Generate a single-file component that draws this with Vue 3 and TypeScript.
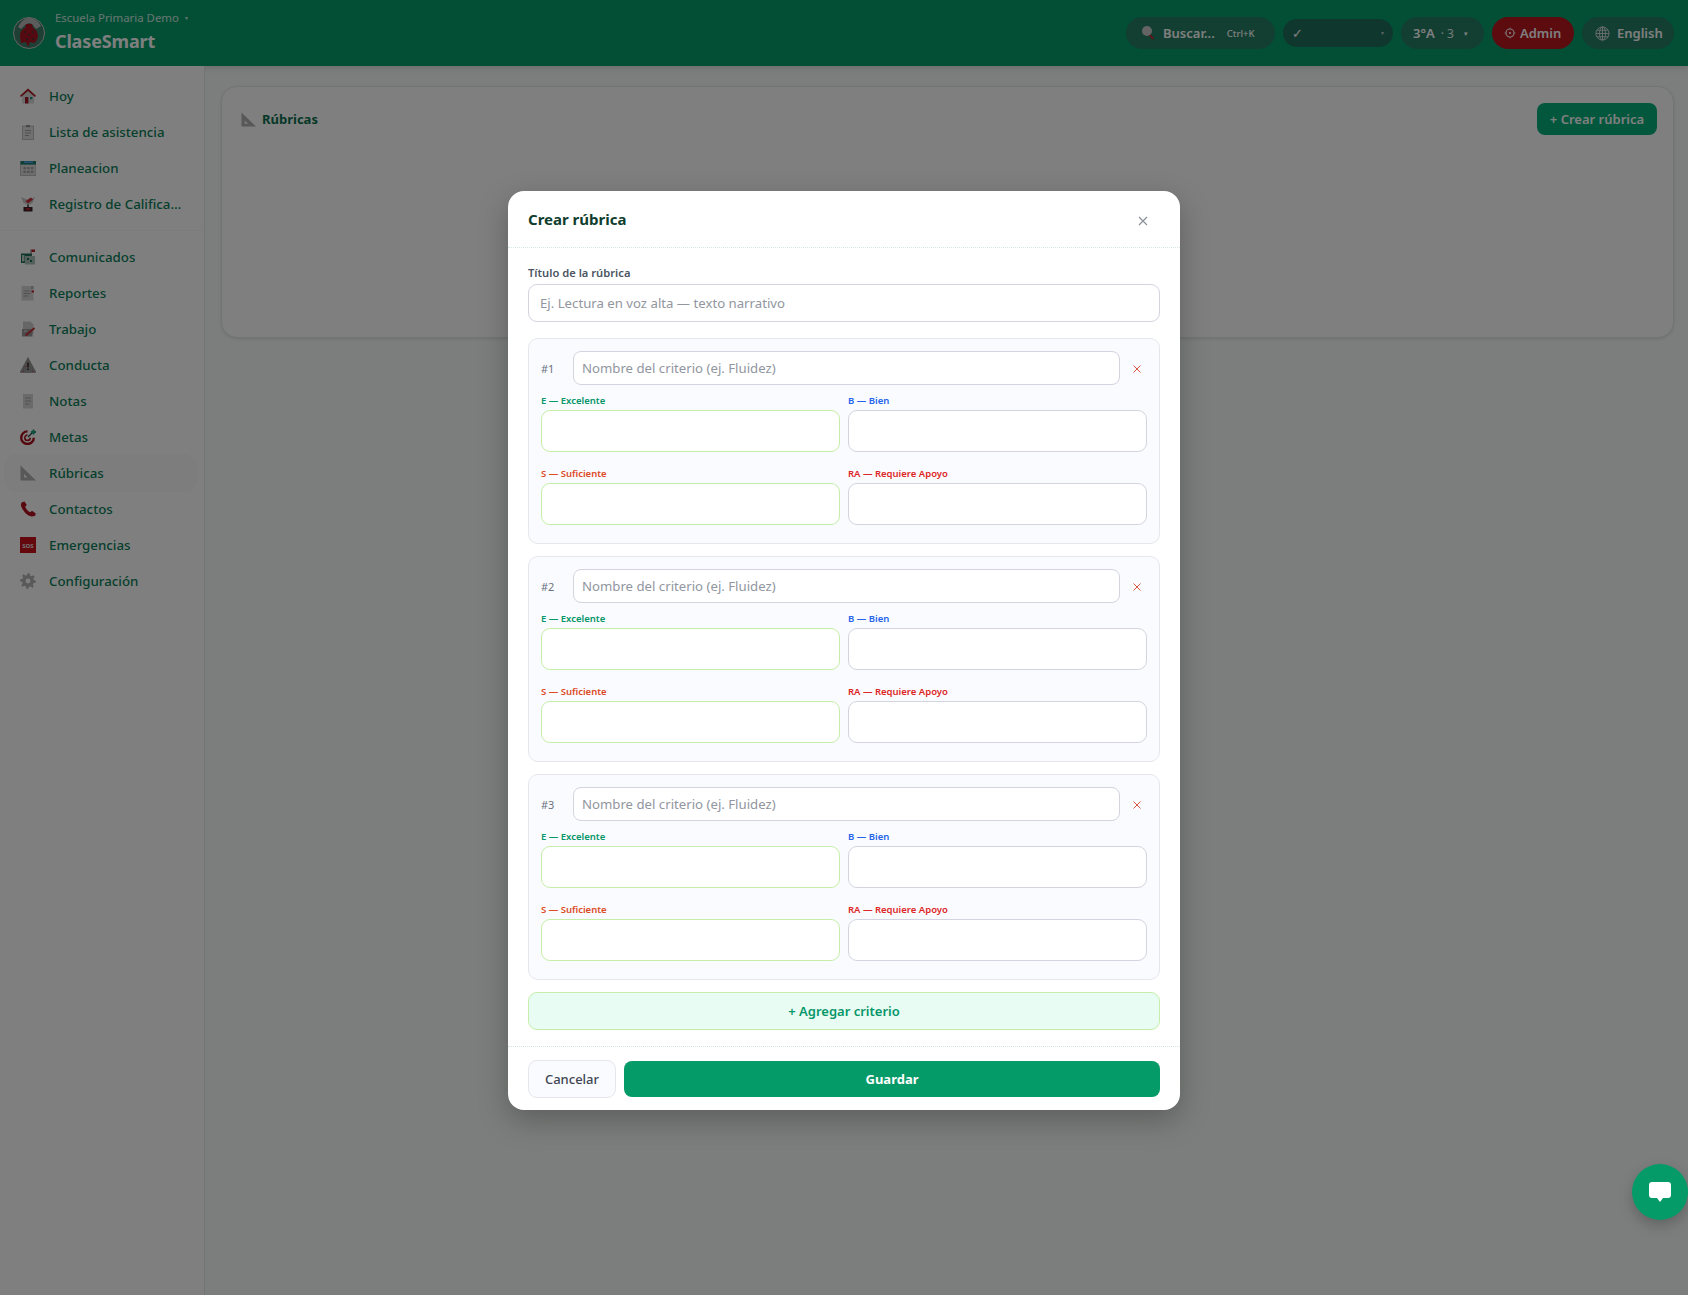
<script setup lang="ts">
interface Shape {
  d: string
  fill?: string
  stroke?: string
  sw?: number
}
interface NavItem {
  label: string
  active?: boolean
  sos?: boolean
  shapes: Shape[]
}

// gear outline, built once so the teeth stay even
function gearPath(cx: number, cy: number, outer: number, inner: number, teeth: number): string {
  const pts: string[] = []
  const step = (Math.PI * 2) / (teeth * 4)
  for (let i = 0; i < teeth * 4; i++) {
    const r = i % 4 < 2 ? outer : inner
    const a = i * step
    pts.push(`${(cx + Math.cos(a) * r).toFixed(2)} ${(cy + Math.sin(a) * r).toFixed(2)}`)
  }
  return `M${pts.join('L')}Z`
}

const rulerPath = 'M0.5 0.5L16 15.5H0.5Z M4 9V12.5H7.5Z'

const topNav: NavItem[] = [
  {
    label: 'Hoy',
    shapes: [
      { d: 'M2 7.5L8 2.5l6 5V15.5H2Z', fill: '#d8d8d8' },
      { d: 'M8 0.5L16 7.8 15 9 8 3 1 9 0 7.8Z', fill: '#a81822' },
      { d: 'M5 9h3.4v6.5H5Z', fill: '#a01b28' },
      { d: 'M10 9h2.4v2.2H10Z', fill: '#1f8a8a' }
    ]
  },
  {
    label: 'Lista de asistencia',
    shapes: [
      { d: 'M2.5 2h11v13.5h-11Z', fill: '#e0e0e0', stroke: '#a8a8a8', sw: 0.7 },
      { d: 'M6 1h4v2.2H6Z', fill: '#909090' },
      { d: 'M5 6.5h6M5 9h6M5 11.5h4', stroke: '#a0a0a0', sw: 1 }
    ]
  },
  {
    label: 'Planeacion',
    shapes: [
      { d: 'M0.5 2h15.5v13.5H0.5Z', fill: '#dcdcdc', stroke: '#9a9a9a', sw: 0.6 },
      { d: 'M0.5 1h15.5v3.6H0.5Z', fill: '#1f7f6f' },
      { d: 'M4 1.4h9v1.5H4Z', fill: '#4aa6ff' },
      { d: 'M3.5 7h2.4v2.2H3.5Zm3.7 0h2.4v2.2H7.2Zm3.7 0h2.4v2.2h-2.4ZM3.5 10.8h2.4V13H3.5Zm3.7 0h2.4V13H7.2Zm3.7 0h2.4V13h-2.4Z', fill: '#a2a2a2' }
    ]
  },
  {
    label: 'Registro de Calificaciones',
    shapes: [
      { d: 'M1 1l7 3 7-3-2.5 6L8 9 3.5 7Z', fill: '#c8c8c8' },
      { d: 'M5.5 5L11 1.5l2 2L8 7.5Z', fill: '#c8323c' },
      { d: 'M7 8.5h2V11H7Z', fill: '#666' },
      { d: 'M3.5 11h9v4.5h-9Z', fill: '#3f2326' },
      { d: 'M6 12.2h4v1.8H6Z', fill: '#b8202c' }
    ]
  }
]

const bottomNav: NavItem[] = [
  {
    label: 'Comunicados',
    shapes: [
      { d: 'M1 4.5h11V14H1Z', fill: '#1d6e58' },
      { d: 'M5 7h10v8.5H5Z', fill: '#a8c0b8' },
      { d: 'M10.5 0.5h1V7h-1Z', fill: '#666' },
      { d: 'M11.5 0.5h3.5v2.5h-3.5Z', fill: '#b8202c' },
      { d: 'M2 6h2.5v6.5H2Z', fill: '#c4d0cc' },
      { d: 'M7 9h2v2H7Zm3 2h2v2h-2Z', fill: '#1d6e58' }
    ]
  },
  {
    label: 'Reportes',
    shapes: [
      { d: 'M1.5 1h12v14.5h-12Z', fill: '#d6d6d6' },
      { d: 'M3.5 6h6M3.5 8.5h7M3.5 11h5', stroke: '#a0a0a0', sw: 1 },
      { d: 'M11.5 5.5h2.5v2h-2.5Z', fill: '#c8202c' },
      { d: 'M11 1h2.5v3H11Z', fill: '#b4b4b4' }
    ]
  },
  {
    label: 'Trabajo',
    shapes: [
      { d: 'M3 0.5h7.5l3 3V13H3Z', fill: '#cdcdcd' },
      { d: 'M2 8h10.5v7.5H2Z', fill: '#989898' },
      { d: 'M5.5 14.5l9-7.5', stroke: '#c8303a', sw: 2 },
      { d: 'M4 10h3', stroke: '#dadada', sw: 1 }
    ]
  },
  {
    label: 'Conducta',
    shapes: [
      { d: 'M8 0.5L16 15.5H0Z', fill: '#969696', stroke: '#787878', sw: 0.5 },
      { d: 'M7.3 5.5h1.4v5H7.3Zm0 6h1.4V13H7.3Z', fill: '#3a1a1c' },
      { d: 'M3 13.5h1v1H3Zm9 0h1v1h-1ZM5 9h1v1H5Z', fill: '#c8323c' }
    ]
  },
  {
    label: 'Notas',
    shapes: [
      { d: 'M3 1h10v14.5H3Z', fill: '#d4d4d4' },
      { d: 'M5 5h6M5 8h6M5 11h4', stroke: '#a4a4a4', sw: 1 }
    ]
  },
  {
    label: 'Metas',
    shapes: [
      { d: 'M7.5 2.4a6.3 6.3 0 1 0 6.3 6.3', stroke: '#a8121e', sw: 2.4 },
      { d: 'M7.5 6a2.7 2.7 0 1 0 2.7 2.7', stroke: '#a8121e', sw: 1.6 },
      { d: 'M8 8L13 3', stroke: '#2b3f3a', sw: 1.2 },
      { d: 'M12.5 0.5h2v1.5H16v2h-1.5v1.5h-2V4H11V2h1.5Z', fill: '#1f9a78' }
    ]
  },
  { label: 'Rúbricas', active: true, shapes: [{ d: rulerPath, fill: '#b0b0b0' }] },
  {
    label: 'Contactos',
    shapes: [
      {
        d: 'M1.5 1.5L4.5 0.5 6.8 4 5.2 5.8C6 8 8 10.2 10.2 11.3L12 9.8 15.8 12.6 15 15 11.5 15.5C6.5 14.5 1.8 8.5 0.8 4Z',
        fill: '#b0101c'
      }
    ]
  },
  { label: 'Emergencias', sos: true, shapes: [{ d: 'M0 0h16v16H0Z', fill: '#c8101c' }] },
  {
    label: 'Configuración',
    shapes: [
      { d: `${gearPath(8, 8, 8, 5.8, 8)} M8 5.6a2.4 2.4 0 1 0 0 4.8a2.4 2.4 0 1 0 0-4.8Z`, fill: '#b2b2b2' }
    ]
  }
]

const levels = [
  { label: 'E — Excelente', cls: 'lv-e', lime: true },
  { label: 'B — Bien', cls: 'lv-b', lime: false },
  { label: 'S — Suficiente', cls: 'lv-s', lime: true },
  { label: 'RA — Requiere Apoyo', cls: 'lv-ra', lime: false }
]

const criteria = [1, 2, 3]
</script>

<template>
  <div class="app">
    <header class="topbar">
      <div class="brand">
        <svg class="logo" viewBox="0 0 32 32" width="32" height="32">
          <circle cx="16" cy="16" r="15.5" fill="#3f7d68" />
          <path d="M5 10C8 4 12 1 16 1s9 2 12 8l-5 3-4-5-3-1-4 2-4 4Z" fill="#b8b8b8" />
          <path d="M7 20c0-5 2-8 5-9l1-4h6l1 4c3 1 5 4 5 9l-3 6-5-1-2 5-2-5-5 1Z" fill="#a81420" />
          <path d="M11 14h2v2h-2Zm4 3h2v2h-2Zm4-3h2v2h-2Zm-6 7h2v2h-2Zm6 0h2v2h-2Z" fill="#5c2a30" />
          <circle cx="16" cy="16" r="15.5" fill="none" stroke="#c8c8c8" />
        </svg>
        <div class="brand-text">
          <div class="school">Escuela Primaria Demo <span class="school-caret">▾</span></div>
          <div class="app-name">ClaseSmart</div>
        </div>
      </div>
      <div class="top-actions">
        <button class="pill search-pill">
          <svg width="14" height="16" viewBox="0 0 14 16">
            <circle cx="6" cy="6" r="5" fill="#c8c8c8" />
            <path d="M9 10l3 4" stroke="#c8202c" stroke-width="2" />
          </svg>
          <span class="pill-text">Buscar...</span>
          <span class="kbd">Ctrl+K</span>
        </button>
        <div class="pill check-pill">
          <span class="check">✓</span>
          <span class="check-caret">▾</span>
        </div>
        <button class="pill group-pill">
          <span class="pill-text">3°A</span>
          <span class="group-count">· 3</span>
          <span class="group-caret">▾</span>
        </button>
        <button class="pill admin-pill">
          <svg width="12" height="12" viewBox="0 0 12 12">
            <circle cx="6" cy="6" r="4" fill="none" stroke="#fff" stroke-width="1.1" />
            <circle cx="6" cy="6" r="1.1" fill="#fff" />
            <path d="M6 .6v1.2M6 10.2v1.2M.6 6h1.2M10.2 6h1.2" stroke="#fff" stroke-width="0.8" />
          </svg>
          <span class="pill-text">Admin</span>
        </button>
        <button class="pill lang-pill">
          <svg width="15" height="15" viewBox="0 0 16 16" fill="none" stroke="#e4e4e4" stroke-width="0.9">
            <circle cx="8" cy="8" r="7" />
            <ellipse cx="8" cy="8" rx="3.2" ry="7" />
            <path d="M1 8h14M2 4.5h12M2 11.5h12M8 1v14" />
          </svg>
          <span class="pill-text">English</span>
        </button>
      </div>
    </header>

    <div class="layout">
      <aside class="sidebar">
        <nav class="nav-group top-group">
          <a v-for="item in topNav" :key="item.label" class="nav-item">
            <svg class="nav-icon" viewBox="0 0 16 16" width="16" height="16">
              <path
                v-for="(s, i) in item.shapes"
                :key="i"
                :d="s.d"
                :fill="s.fill || 'none'"
                :stroke="s.stroke"
                :stroke-width="s.sw"
                fill-rule="evenodd"
              />
            </svg>
            <span class="nav-label">{{ item.label }}</span>
          </a>
        </nav>
        <nav class="nav-group">
          <a
            v-for="item in bottomNav"
            :key="item.label"
            class="nav-item"
            :class="{ active: item.active }"
          >
            <svg class="nav-icon" viewBox="0 0 16 16" width="16" height="16">
              <path
                v-for="(s, i) in item.shapes"
                :key="i"
                :d="s.d"
                :fill="s.fill || 'none'"
                :stroke="s.stroke"
                :stroke-width="s.sw"
                fill-rule="evenodd"
              />
              <text v-if="item.sos" x="8" y="10.5" text-anchor="middle" class="sos">SOS</text>
            </svg>
            <span class="nav-label">{{ item.label }}</span>
          </a>
        </nav>
      </aside>

      <main class="content">
        <section class="panel">
          <div class="panel-head">
            <h2 class="panel-title">
              <svg viewBox="0 0 16 16" width="15" height="15">
                <path :d="rulerPath" fill="#b0b0b0" fill-rule="evenodd" />
              </svg>
              Rúbricas
            </h2>
            <button class="create-btn">+ Crear rúbrica</button>
          </div>
        </section>
      </main>
    </div>

    <div class="overlay">
      <div class="modal">
        <div class="modal-head">
          <h3>Crear rúbrica</h3>
          <svg class="close" width="10" height="10" viewBox="0 0 10 10">
            <path d="M1 1l8 8M9 1l-8 8" stroke="#8b8f98" stroke-width="1.2" />
          </svg>
        </div>
        <div class="modal-body">
          <label class="title-label">Título de la rúbrica</label>
          <input class="title-input" placeholder="Ej. Lectura en voz alta — texto narrativo" />

          <div v-for="n in criteria" :key="n" class="criterion">
            <div class="crit-row">
              <span class="crit-num">#{{ n }}</span>
              <input class="crit-input" placeholder="Nombre del criterio (ej. Fluidez)" />
              <svg class="crit-remove" width="8" height="8" viewBox="0 0 8 8">
                <path d="M.5.5l7 7M7.5.5l-7 7" stroke="#d9553f" stroke-width="1" />
              </svg>
            </div>
            <div class="levels">
              <div v-for="lv in levels" :key="lv.label" class="level">
                <label :class="lv.cls">{{ lv.label }}</label>
                <textarea :class="{ lime: lv.lime }"></textarea>
              </div>
            </div>
          </div>

          <button class="add-btn">+ Agregar criterio</button>
        </div>
        <div class="modal-foot">
          <button class="cancel-btn">Cancelar</button>
          <button class="save-btn">Guardar</button>
        </div>
      </div>
    </div>

    <button class="fab">
      <svg width="22" height="20" viewBox="0 0 22 20">
        <path d="M3 0h16a3 3 0 0 1 3 3v10a3 3 0 0 1-3 3h-5l-3 4-3-4H3a3 3 0 0 1-3-3V3a3 3 0 0 1 3-3Z" fill="#fff" />
      </svg>
    </button>
  </div>
</template>

<style scoped>
.app {
  position: relative;
  min-height: 100vh;
  display: flex;
  flex-direction: column;
  font-family: "Noto Sans", "Liberation Sans", sans-serif;
  background: #f7fcf9;
}
button {
  font-family: inherit;
  border: none;
  cursor: pointer;
}

.topbar {
  height: 66px;
  flex: none;
  display: flex;
  align-items: center;
  justify-content: space-between;
  padding: 0 14px 0 13px;
  background: #059e6b;
  box-shadow: 0 2px 6px rgba(0, 0, 0, 0.12);
}
.brand {
  display: flex;
  align-items: center;
  gap: 10px;
}
.logo {
  display: block;
}
.brand-text {
  color: #fff;
  margin-bottom: 4px;
}
.school {
  font-size: 11.4px;
  line-height: 15px;
  margin-bottom: 3px;
  opacity: 0.8;
}
.school-caret {
  font-size: 6px;
  margin-left: 3px;
  vertical-align: 2px;
}
.app-name {
  font-size: 18px;
  line-height: 24px;
  font-weight: 700;
  letter-spacing: -0.15px;
}
.top-actions {
  display: flex;
  align-items: center;
  gap: 8px;
}
.pill {
  height: 32px;
  box-sizing: border-box;
  border-radius: 16px;
  display: flex;
  align-items: center;
  background: #267f66;
  color: #fff;
  padding: 0;
}
.pill-text {
  font-size: 13px;
  font-weight: 600;
}
.search-pill {
  width: 149px;
  padding-left: 15px;
}
.kbd {
  font-size: 9.5px;
  margin-left: 12px;
  font-weight: 500;
}
.search-pill .pill-text {
  margin-left: 8px;
}
.check-pill {
  width: 110px;
  height: 28px;
  padding: 0 9px;
  background: #1f6f5c;
  justify-content: space-between;
}
.check {
  font-size: 13px;
}
.check-caret {
  font-size: 6px;
  opacity: 0.6;
}
.group-pill {
  width: 83px;
  padding-left: 12px;
}
.group-count {
  font-size: 12px;
  margin-left: 6px;
  opacity: 0.9;
}
.group-caret {
  font-size: 7px;
  margin-left: 10px;
}
.admin-pill {
  width: 82px;
  padding-left: 12px;
  gap: 4px;
  background: #b8161f;
}
.lang-pill {
  width: 92px;
  padding-left: 13px;
  gap: 7px;
}

.layout {
  flex: 1;
  display: flex;
}
.sidebar {
  width: 204px;
  flex: none;
  box-sizing: content-box;
  border-right: 1px solid #e2e8e5;
  background: #fff;
  padding-top: 12px;
}
.top-group {
  padding-bottom: 8px;
  margin-bottom: 8px;
  border-bottom: 1px solid #f8f9f9;
}
.nav-item {
  height: 36px;
  display: flex;
  align-items: center;
  gap: 13px;
  margin: 0 8px 0 5px;
  padding: 0 9px 0 15px;
  border-radius: 12px;
  font-size: 13.3px;
  font-weight: 500;
  color: #0c7f5a;
}
.nav-item.active {
  background: #f8faf9;
  box-shadow: 0 0 0 1px #f8faf9;
}
.nav-icon {
  flex: none;
  display: block;
}
.nav-label {
  white-space: nowrap;
  overflow: hidden;
  text-overflow: ellipsis;
}
.sos {
  font-size: 6px;
  font-weight: 700;
  fill: #e6e6e6;
}

.content {
  flex: 1;
  padding: 20px 14px 0 16px;
}
.panel {
  height: 252px;
  box-sizing: border-box;
  background: #fff;
  border: 1px solid #e4e9e6;
  border-radius: 16px;
  box-shadow: 0 1px 3px rgba(0, 0, 0, 0.1);
  padding: 16px 16px 0 19px;
}
.panel-head {
  display: flex;
  align-items: center;
  justify-content: space-between;
}
.panel-title {
  margin: 0;
  display: flex;
  align-items: center;
  gap: 6px;
  font-size: 13px;
  font-weight: 700;
  color: #0d7050;
}
.create-btn {
  width: 120px;
  height: 32px;
  border-radius: 8px;
  background: #05ae78;
  color: #fff;
  font-size: 13px;
  font-weight: 600;
}

.overlay {
  position: absolute;
  inset: 0;
  z-index: 20;
  background: rgba(0, 0, 0, 0.5);
  display: flex;
  justify-content: center;
  align-items: flex-start;
  padding-top: 191px;
}
.modal {
  width: 672px;
  background: #fff;
  border-radius: 16px;
  box-shadow: 0 10px 30px rgba(0, 0, 0, 0.25);
}
.modal-head {
  height: 57px;
  box-sizing: border-box;
  display: flex;
  align-items: center;
  justify-content: space-between;
  padding: 0 32px 0 20px;
  border-bottom: 1px dotted #d5e8e0;
}
.modal-head h3 {
  margin: 0;
  font-size: 15px;
  font-weight: 700;
  color: #0f3d2e;
}
.close {
  margin-top: 4px;
}
.modal-body {
  padding: 18px 20px 16px;
  display: flex;
  flex-direction: column;
}
.title-label {
  font-size: 11.2px;
  line-height: 14px;
  font-weight: 600;
  color: #4b5563;
  margin-bottom: 4px;
}
input,
textarea {
  box-sizing: border-box;
  display: block;
  font-family: inherit;
  background: #fff;
  border: 1px solid #d4d4e0;
  outline: none;
  resize: none;
}
input::placeholder {
  color: #9196a0;
}
.title-input {
  width: 100%;
  height: 38px;
  border-radius: 9px;
  padding: 0 11px;
  font-size: 13.2px;
  margin-bottom: 16px;
}
.criterion {
  background: #fafbfe;
  border: 1px solid #e5e7ec;
  border-radius: 10px;
  padding: 12px 12px 18px;
  margin-bottom: 12px;
}
.crit-row {
  display: flex;
  align-items: center;
  height: 34px;
  margin-bottom: 9px;
}
.crit-num {
  width: 32px;
  flex: none;
  font-size: 11px;
  font-weight: 400;
  color: #6b7280;
}
.crit-input {
  flex: 1;
  height: 34px;
  border-radius: 8px;
  padding: 0 8px;
  font-size: 13.2px;
}
.crit-remove {
  flex: none;
  margin: 2px 6px 0 13px;
}
.levels {
  display: grid;
  grid-template-columns: 1fr 1fr;
  gap: 15px 8px;
}
.level label {
  display: block;
  font-size: 9.5px;
  line-height: 14px;
  font-weight: 600;
  margin-bottom: 2px;
}
.level textarea {
  width: 100%;
  height: 42px;
  border-radius: 9px;
}
.level textarea.lime {
  border-color: #c5efa8;
}
.lv-e {
  color: #059669;
}
.lv-b {
  color: #2563eb;
}
.lv-s {
  color: #dc4a26;
}
.lv-ra {
  color: #dc2626;
}
.add-btn {
  height: 38px;
  border: 1px solid #c5efa8;
  border-radius: 9px;
  background: #e9fcf3;
  color: #059669;
  font-size: 13px;
  font-weight: 600;
}
.modal-foot {
  display: flex;
  align-items: center;
  gap: 8px;
  padding: 13px 20px 12px;
  border-top: 1px dotted #d5e8e0;
}
.cancel-btn {
  width: 88px;
  height: 38px;
  flex: none;
  background: #fafbfe;
  border: 1px solid #e5e7ec;
  border-radius: 9px;
  color: #3f4652;
  font-size: 13px;
  font-weight: 500;
}
.save-btn {
  flex: 1;
  height: 36px;
  background: #059b69;
  color: #fff;
  border-radius: 8px;
  font-size: 13px;
  font-weight: 700;
}
.fab {
  position: absolute;
  z-index: 30;
  top: 1164px;
  right: 0;
  width: 56px;
  height: 56px;
  border-radius: 50%;
  background: #059b69;
  display: flex;
  align-items: center;
  justify-content: center;
  padding: 0;
  box-shadow: 0 6px 14px rgba(0, 0, 0, 0.2);
}
</style>
